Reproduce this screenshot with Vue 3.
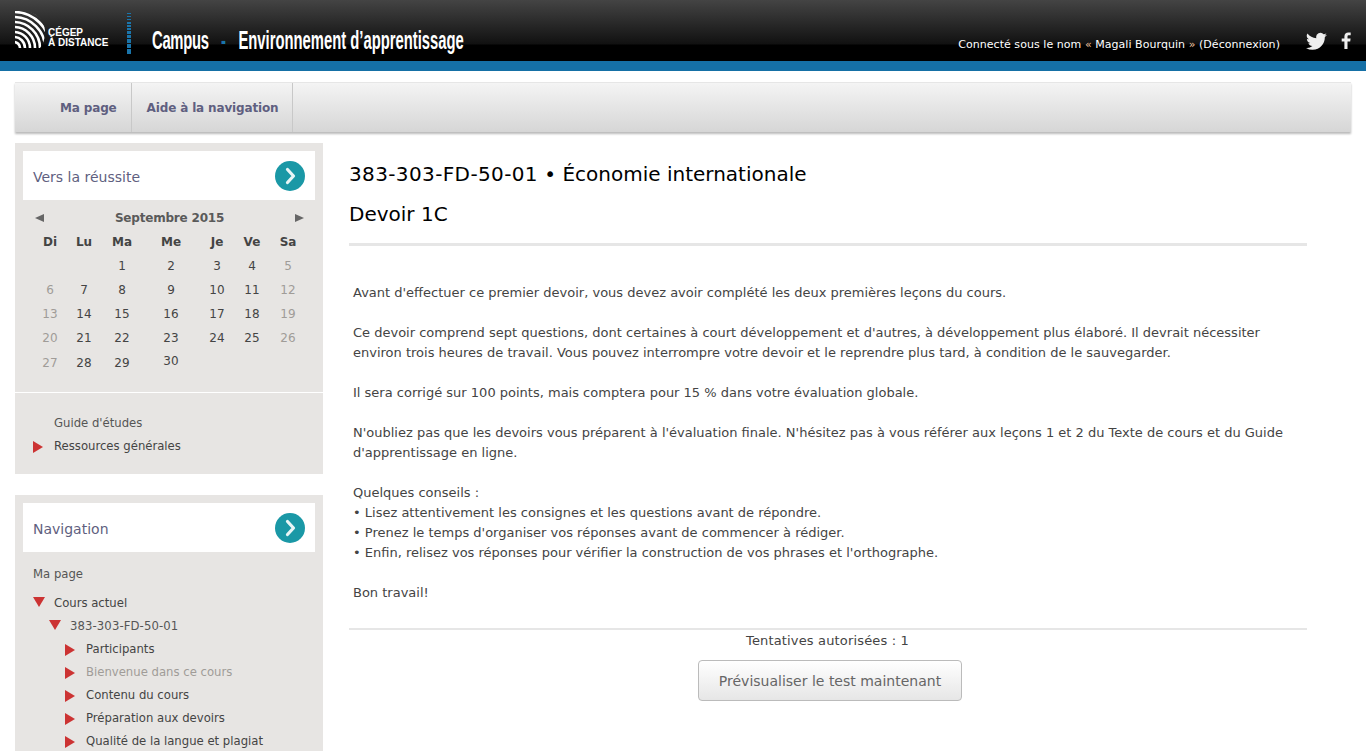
<script setup>
const weeks = [
  ['', '', '1', '2', '3', '4', '5'],
  ['6', '7', '8', '9', '10', '11', '12'],
  ['13', '14', '15', '16', '17', '18', '19'],
  ['20', '21', '22', '23', '24', '25', '26'],
  ['27', '28', '29', '30', '', '', ''],
]
const days = ['Di', 'Lu', 'Ma', 'Me', 'Je', 'Ve', 'Sa']
const logoBars = [
  [0, 1], [3, 1], [6, 1], [9, 2], [12, 2], [15, 2], [18, 3], [22, 3], [26, 4], [31, 4], [36, 5],
]
const arcs = [6, 11, 16, 21, 26, 31, 36, 41]
const courseItems = [
  { label: 'Participants' },
  { label: 'Bienvenue dans ce cours', muted: true },
  { label: 'Contenu du cours' },
  { label: 'Préparation aux devoirs' },
  { label: 'Qualité de la langue et plagiat' },
]
</script>

<template>
  <div class="page">
    <header class="topbar">
      <div class="brand">
        <svg class="logo-mark" width="32" height="38" viewBox="0 0 32 38" aria-hidden="true">
          <defs>
            <clipPath id="logoClip">
              <path d="M0 0 H6 C20 0 30 9 30 21 C30 28 28 33 25 37 H0 Z" />
            </clipPath>
          </defs>
          <g clip-path="url(#logoClip)" fill="none" stroke="#fff" stroke-width="2.6">
            <circle v-for="r in arcs" :key="r" cx="-1" cy="37" :r="r" />
          </g>
        </svg>
        <div class="logo-text">CÉGEP<br />À DISTANCE</div>
        <svg class="logo-bars" width="5" height="41" viewBox="0 0 5 41" aria-hidden="true">
          <rect v-for="b in logoBars" :key="b[0]" x="0" :y="b[0]" width="4" :height="b[1]" fill="#1a75ab" />
        </svg>
        <div class="site-title">
          <span class="campus">Campus</span>
          <span class="dash">-</span>
          <span>Environnement d’apprentissage</span>
        </div>
      </div>
      <div class="user-area">
        <div class="login">Connecté sous le nom <span class="quote">«</span> Magali Bourquin <span class="quote">»</span> (Déconnexion)</div>
        <svg class="tw" width="21" height="19" viewBox="0 0 24 20" aria-label="Twitter">
          <path fill="#eee" d="M24 2.4a9.8 9.8 0 0 1-2.8.8A4.9 4.9 0 0 0 23.300.5a9.800 9.800 0 0 1-3.100 1.200A4.900 4.900 0 0 0 11.800 6.200 13.900 13.900 0 0 1 1.700.9a4.900 4.900 0 0 0 1.500 6.600A4.900 4.900 0 0 1 1 6.900a4.900 4.900 0 0 0 3.900 4.800 4.900 4.900 0 0 1-2.200.1 4.900 4.900 0 0 0 4.600 3.400A9.900 9.900 0 0 1 0 17.300 13.900 13.900 0 0 0 7.500 19.500c9.100 0 14.300-7.700 14-14.600A10 10 0 0 0 24 2.400z" />
        </svg>
        <svg class="fb" width="10" height="17" viewBox="0 0 10 17" aria-label="Facebook">
          <path fill="#eee" d="M6.500 17V9.600h2.700l.4-3H6.500V4.700c0-.9.300-1.400 1.500-1.400h1.700V.6C9.400.5 8.400.4 7.300.4 5 .4 3.400 1.800 3.400 4.400v2.200H.7v3h2.700V17z" />
        </svg>
      </div>
    </header>
    <div class="blue-band"></div>

    <nav class="menu">
      <a class="menu-item first">Ma page</a>
      <a class="menu-item">Aide à la navigation</a>
    </nav>

    <div class="columns">
      <aside class="side">
        <section class="block first-block">
          <div class="block-head">
            <span class="head-label">Vers la réussite</span>
            <span class="go"><svg width="30" height="30" viewBox="0 0 30 30"><path d="M12.500 8.500 18.500 15 12.500 21.500" fill="none" stroke="#e9f5f6" stroke-width="3.200" stroke-linecap="round" stroke-linejoin="round" /></svg></span>
          </div>
          <div class="cal-title">
            <span class="cal-arrow left"></span>
            <span>Septembre 2015</span>
            <span class="cal-arrow right"></span>
          </div>
          <div class="cal-grid cal-days">
            <span v-for="d in days" :key="d">{{ d }}</span>
          </div>
          <div v-for="(w, i) in weeks" :key="i" class="cal-grid cal-row">
            <span
              v-for="(n, j) in w"
              :key="j"
              :class="{ weekend: j === 0 || j === 6, shifted: n === '30' }"
            >{{ n }}</span>
          </div>
          <div class="block-rule"></div>
          <ul class="tree resources">
            <li class="muted-dark">Guide d'études</li>
            <li class="arrow-right">Ressources générales</li>
          </ul>
        </section>

        <section class="block">
          <div class="block-head">
            <span class="head-label">Navigation</span>
            <span class="go"><svg width="30" height="30" viewBox="0 0 30 30"><path d="M12.500 8.500 18.500 15 12.500 21.500" fill="none" stroke="#e9f5f6" stroke-width="3.200" stroke-linecap="round" stroke-linejoin="round" /></svg></span>
          </div>
          <div class="my-page">Ma page</div>
          <ul class="tree">
            <li class="arrow-down">Cours actuel</li>
            <li class="arrow-down level-1 code">383-303-FD-50-01</li>
            <li
              v-for="item in courseItems"
              :key="item.label"
              class="arrow-right level-2"
              :class="{ muted: item.muted }"
            >{{ item.label }}</li>
          </ul>
        </section>
      </aside>

      <main class="content">
        <h1><span class="course-code">383-303-FD-50-01</span> • Économie internationale</h1>
        <h2>Devoir 1C</h2>
        <div class="intro">
          <p>Avant d'effectuer ce premier devoir, vous devez avoir complété les deux premières leçons du cours.</p>
          <p>Ce devoir comprend sept questions, dont certaines à court développement et d'autres, à développement plus élaboré. Il devrait nécessiter environ trois heures de travail. Vous pouvez interrompre votre devoir et le reprendre plus tard, à condition de le sauvegarder.</p>
          <p>Il sera corrigé sur 100 points, mais comptera pour 15 % dans votre évaluation globale.</p>
          <p>N'oubliez pas que les devoirs vous préparent à l'évaluation finale. N'hésitez pas à vous référer aux leçons 1 et 2 du Texte de cours et du Guide d'apprentissage en ligne.</p>
          <p>Quelques conseils :<br />• Lisez attentivement les consignes et les questions avant de répondre.<br />• Prenez le temps d'organiser vos réponses avant de commencer à rédiger.<br />• Enfin, relisez vos réponses pour vérifier la construction de vos phrases et l'orthographe.</p>
          <p>Bon travail!</p>
        </div>
        <div class="attempts">Tentatives autorisées : 1</div>
        <div class="actions">
          <button type="button" class="preview">Prévisualiser le test maintenant</button>
        </div>
      </main>
    </div>
  </div>
</template>

<style scoped>
.page {
  width: 1366px;
  height: 751px;
  overflow: hidden;
  background: #fff;
  font-family: "DejaVu Sans", Verdana, sans-serif;
  font-size: 12px;
  color: #444;
}
.topbar {
  height: 61px;
  display: flex;
  justify-content: space-between;
  background: linear-gradient(to bottom, #444 0, #111 44px, #000 45px, #000 61px);
}
.brand {
  display: flex;
  align-items: flex-start;
  padding-left: 15px;
}
.logo-mark {
  margin-top: 11px;
}
.logo-text {
  margin: 28px 0 0 1px;
  font-family: "Liberation Sans", Arial, sans-serif;
  font-weight: 700;
  font-size: 10px;
  line-height: 10px;
  color: #fff;
}
.logo-bars {
  margin: 13px 0 0 19px;
}
.site-title {
  display: flex;
  gap: 21px;
  margin: 25px 0 0 20px;
  font-family: "Liberation Sans", Arial, sans-serif;
  font-weight: 700;
  font-size: 25px;
  line-height: 30px;
  color: #fff;
  white-space: nowrap;
  transform: scaleX(0.592);
  transform-origin: left top;
}
.campus {
  letter-spacing: -0.5px;
}
.dash {
  color: #1a75ab;
}
.user-area {
  display: flex;
  align-items: flex-start;
}
.login {
  margin-top: 38px;
  font-size: 11px;
  line-height: 14px;
  letter-spacing: 0.05px;
  color: #fff;
}
.quote {
  color: #f2c6a0;
}
.tw {
  margin: 32px 0 0 26px;
}
.fb {
  margin: 32px 15px 0 14px;
}
.blue-band {
  height: 10px;
  background: #1570a6;
}
.menu {
  display: flex;
  height: 49px;
  margin: 11px 15px 0;
  border-top: 1px solid #e6e6e6;
  background: linear-gradient(to bottom, #f4f4f4, #d6d6d6);
  box-shadow: 0 2px 2px #bbb;
}
.menu-item {
  display: flex;
  align-items: center;
  padding: 0 14px 0 15px;
  border-right: 1px solid #c8c8c8;
  font-weight: 700;
  font-size: 12px;
  letter-spacing: -0.15px;
  color: #5f5f80;
}
.menu-item.first {
  padding-left: 45px;
}
.columns {
  display: flex;
  margin: 11px 15px 0;
}
.side {
  flex: 0 0 308px;
}
.block {
  background: #e7e5e3;
  padding-top: 8px;
}
.first-block {
  margin-bottom: 21px;
  padding-bottom: 16px;
}
.block-head {
  height: 49px;
  margin: 0 8px;
  padding: 0 10px;
  display: flex;
  align-items: center;
  justify-content: space-between;
  background: #fff;
  font-size: 14px;
  color: #5f5f80;
}
.head-label {
  padding-top: 2px;
}
.go {
  width: 30px;
  height: 30px;
  border-radius: 50%;
  background: #1a98a6;
}
.go svg {
  display: block;
}
.cal-title {
  display: flex;
  align-items: center;
  justify-content: space-between;
  height: 16px;
  margin: 10px 19px 0 20px;
  font-weight: 700;
  font-size: 12px;
  letter-spacing: -0.2px;
  color: #5a5a5a;
}
.cal-arrow {
  width: 0;
  height: 0;
  border-top: 4.500px solid transparent;
  border-bottom: 4.500px solid transparent;
}
.cal-arrow.left {
  border-right: 9px solid #666;
}
.cal-arrow.right {
  border-left: 9px solid #666;
}
.cal-grid {
  display: grid;
  grid-template-columns: 34px 34px 42px 56px 36px 34px 38px;
  margin-left: 18px;
  text-align: center;
  line-height: 24px;
  color: #444;
}
.cal-days {
  font-weight: 700;
  margin-top: 4px;
}
.cal-row .weekend {
  color: #a09c98;
}
.cal-row:nth-last-child(3) {
  line-height: 27px;
}
.shifted {
  margin-top: -2px;
}
.block-rule {
  height: 1px;
  margin-top: 15px;
  background: #fff;
}
.tree {
  list-style: none;
  margin: 0;
  padding: 0 0 0 39px;
  font-size: 11.67px;
}
.resources {
  padding-top: 19px;
}
.tree li {
  position: relative;
  height: 23px;
  line-height: 23px;
}
.muted-dark {
  color: #555;
}
.arrow-right::before,
.arrow-down::before {
  content: "";
  position: absolute;
  width: 0;
  height: 0;
}
.arrow-right::before {
  left: -21px;
  top: 6px;
  border-top: 6px solid transparent;
  border-bottom: 6px solid transparent;
  border-left: 10px solid #cc3333;
}
.arrow-down::before {
  left: -21px;
  top: 5px;
  border-left: 6.500px solid transparent;
  border-right: 6.500px solid transparent;
  border-top: 10px solid #cc3333;
}
.my-page {
  padding: 14px 0 0 18px;
  font-size: 11.67px;
  line-height: 16px;
  color: #555;
}
.my-page + .tree {
  margin-top: 10px;
}
.level-1 {
  margin-left: 16px;
}
.level-2 {
  margin-left: 32px;
}
.code {
  color: #555;
  letter-spacing: 0.1px;
}
.muted {
  color: #a09c98;
}
.content {
  flex: 0 0 958px;
  margin-left: 26px;
}
h1,
h2 {
  margin: 0;
  font-weight: 400;
  font-size: 20px;
  color: #000;
}
h1 {
  padding-top: 18px;
  line-height: 26px;
}
.course-code {
  letter-spacing: 0.37px;
}
h2 {
  padding-top: 14px;
  padding-bottom: 16px;
  line-height: 26px;
  border-bottom: 3px solid #e6e6e6;
}
.intro {
  padding: 37px 4px 25px 4px;
  border-bottom: 2px solid #e6e6e6;
  font-size: 13px;
  line-height: 20px;
  color: #444;
}
.intro p {
  margin: 0 0 20px;
}
.intro p:last-child {
  margin-bottom: 0;
}
.attempts {
  padding: 1px 1px 0 0;
  text-align: center;
  font-size: 13px;
  line-height: 20px;
  letter-spacing: 0.16px;
  color: #444;
}
.actions {
  display: flex;
  justify-content: center;
  margin-top: 9px;
}
.preview {
  width: 264px;
  height: 41px;
  margin-left: 4px;
  border: 1px solid #bbb;
  border-radius: 4px;
  background: linear-gradient(to bottom, #fff, #e6e6e6);
  font-family: inherit;
  font-size: 14px;
  color: #666;
  padding: 0;
}
</style>

<style>
html,
body {
  margin: 0;
  overflow: hidden;
}
</style>
